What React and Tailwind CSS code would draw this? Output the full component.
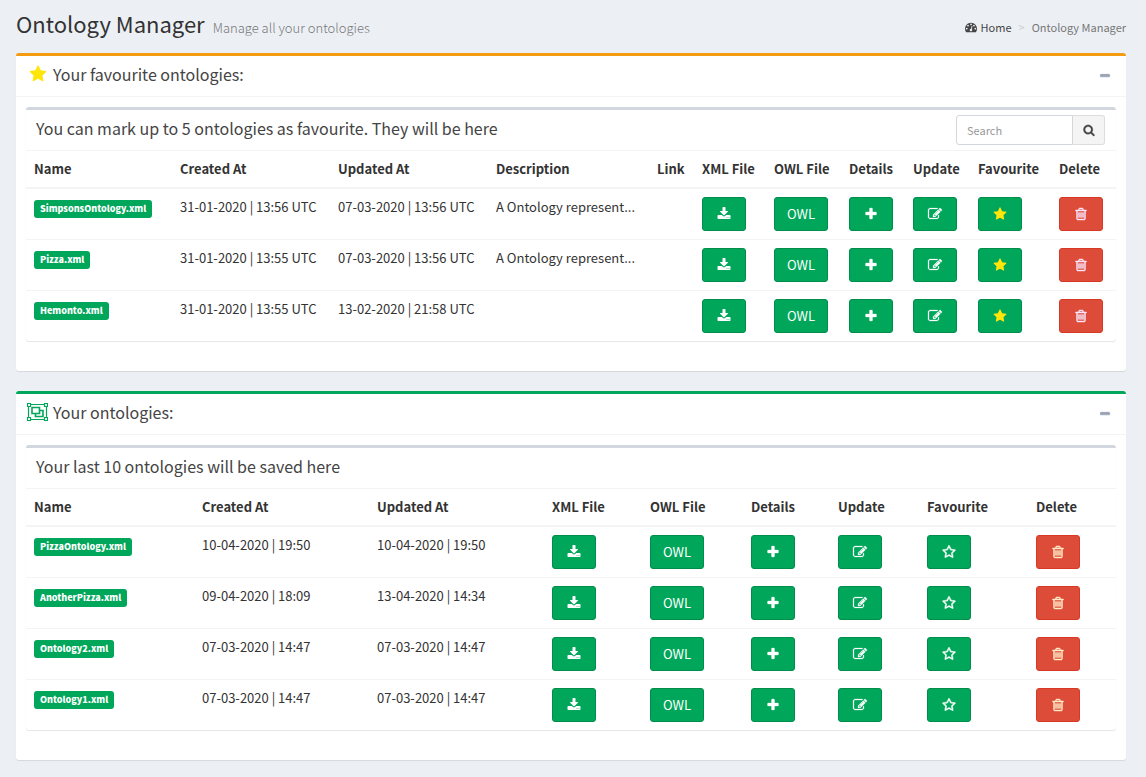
const PATHS = {
  download:
    "M1344 1344q0-26-19-45t-45-19-45 19-19 45 19 45 45 19 45-19 19-45zm256 0q0-26-19-45t-45-19-45 19-19 45 19 45 45 19 45-19 19-45zm128-224v320q0 40-28 68t-68 28h-1472q-40 0-68-28t-28-68v-320q0-40 28-68t68-28h465l135 136q58 56 136 56t136-56l136-136h464q40 0 68 28t28 68zm-325-569q17 41-14 70l-448 448q-18 19-45 19t-45-19l-448-448q-31-29-14-70 17-39 59-39h256v-448q0-26 19-45t45-19h256q26 0 45 19t19 45v448h256q42 0 59 39z",
  plus: "M1600 736v192q0 40-28 68t-68 28h-416v416q0 40-28 68t-68 28h-192q-40 0-68-28t-28-68v-416h-416q-40 0-68-28t-28-68v-192q0-40 28-68t68-28h416v-416q0-40 28-68t68-28h192q40 0 68 28t28 68v416h416q40 0 68 28t28 68z",
  minus: "M1600 736v192q0 40-28 68t-68 28h-1216q-40 0-68-28t-28-68v-192q0-40 28-68t68-28h1216q40 0 68 28t28 68z",
  star: "M1728 647q0 22-26 48l-363 354 86 500q1 7 1 20 0 21-10.5 35.5t-30.5 14.5q-19 0-40-12l-449-236-449 236q-22 12-40 12-21 0-31.5-14.5t-10.5-35.5q0-6 2-20l86-500-364-354q-25-27-25-48 0-37 56-46l502-73 225-455q19-41 49-41t49 41l225 455 502 73q56 9 56 46z",
  starOutline:
    "M1201 1004l306-297-422-62-189-382-189 382-422 62 306 297-73 421 378-199 377 199zm527-357q0 22-26 48l-363 354 86 500q1 7 1 20 0 50-41 50-19 0-40-12l-449-236-449 236q-22 12-40 12-21 0-31.5-14.5t-10.5-35.5q0-6 2-20l86-500-364-354q-25-27-25-48 0-37 56-46l502-73 225-455q19-41 49-41t49 41l225 455 502 73q56 9 56 46z",
  trash:
    "M704 736v576q0 14-9 23t-23 9h-64q-14 0-23-9t-9-23v-576q0-14 9-23t23-9h64q14 0 23 9t9 23zm256 0v576q0 14-9 23t-23 9h-64q-14 0-23-9t-9-23v-576q0-14 9-23t23-9h64q14 0 23 9t9 23zm256 0v576q0 14-9 23t-23 9h-64q-14 0-23-9t-9-23v-576q0-14 9-23t23-9h64q14 0 23 9t9 23zm128 724v-948h-896v948q0 22 7 40.5t14.5 27 10.5 8.5h832q3 0 10.5-8.5t14.5-27 7-40.5zm-672-1076h448l-48-117q-7-9-17-11h-317q-10 2-17 11zm928 32v64q0 14-9 23t-23 9h-96v948q0 83-47 143.5t-113 60.5h-832q-66 0-113-58.5t-47-141.5v-952h-96q-14 0-23-9t-9-23v-64q0-14 9-23t23-9h309l70-167q15-37 54-63t79-26h320q40 0 79 26t54 63l70 167h309q14 0 23 9t9 23z",
  edit: "M888 1184l116-116-152-152-116 116v56h96v96h56zm440-720q-16-16-33 1l-350 350q-17 17-1 33t33-1l350-350q17-17 1-33zm80 594v190q0 119-84.5 203.5t-203.5 84.5h-832q-119 0-203.5-84.5t-84.5-203.5v-832q0-119 84.5-203.5t203.5-84.5h832q63 0 117 25 15 7 18 23 3 17-9 29l-49 49q-14 14-32 8-23-6-45-6h-832q-66 0-113 47t-47 113v832q0 66 47 113t113 47h832q66 0 113-47t47-113v-126q0-13 9-22l64-64q15-15 35-7t20 29zm-96-738l288 288-672 672h-288v-288zm444 132l-92 92-288-288 92-92q28-28 68-28t68 28l152 152q28 28 28 68t-28 68z",
  search:
    "M1216 832q0-185-131.5-316.5t-316.5-131.5-316.5 131.5-131.5 316.5 131.5 316.5 316.5 131.5 316.5-131.5 131.5-316.5zm512 832q0 52-38 90t-90 38q-54 0-90-38l-343-342q-179 124-399 124-143 0-273.5-55.5t-225-150-150-225-55.5-273.5 55.5-273.5 150-225 225-150 273.5-55.5 273.5 55.5 225 150 150 225 55.5 273.5q0 220-124 399l343 343q37 37 37 90z",
  dashboard:
    "M384 1152q0-53-37.5-90.5t-90.5-37.5-90.5 37.5-37.5 90.5 37.5 90.5 90.5 37.5 90.5-37.5 37.5-90.5zm192-448q0-53-37.5-90.5t-90.5-37.5-90.5 37.5-37.5 90.5 37.5 90.5 90.5 37.5 90.5-37.5 37.5-90.5zm428 481l101-382q6-26-7.5-48.5t-38.5-29.5-48 6.5-30 39.5l-101 382q-60 5-107 43.5t-63 98.5q-20 77 20 146t117 89 146-20 89-117q16-60-6-117t-72-91zm660-33q0-53-37.5-90.5t-90.5-37.5-90.5 37.5-37.5 90.5 37.5 90.5 90.5 37.5 90.5-37.5 37.5-90.5zm-640-640q0-53-37.5-90.5t-90.5-37.5-90.5 37.5-37.5 90.5 37.5 90.5 90.5 37.5 90.5-37.5 37.5-90.5zm448 192q0-53-37.5-90.5t-90.5-37.5-90.5 37.5-37.5 90.5 37.5 90.5 90.5 37.5 90.5-37.5 37.5-90.5zm320 448q0 261-141 483-19 29-54 29h-1402q-35 0-54-29-141-221-141-483 0-182 71-348t191-286 286-191 348-71 348 71 286 191 191 286 71 348z",
};

const BOLD = { starOutline: 70, trash: 60, edit: 30, minus: 90, plus: 40, search: 40 };

function Icon({ name, className = "size-3.5" }) {
  return (
    <svg
      viewBox="0 0 1792 1792"
      fill="currentColor"
      stroke="currentColor"
      strokeWidth={BOLD[name] || 0}
      overflow="visible"
      aria-hidden="true"
      className={className}
    >
      <path d={PATHS[name]} />
    </svg>
  );
}

function GroupIcon() {
  return (
    <svg viewBox="0 0 21 18" fill="none" stroke="#00a65a" aria-hidden="true" className="h-[18px] w-[21px]">
      <path d="M3.5 1.5h14M3.5 16.5h14M1.5 3.5v11M19.5 3.5v11" strokeWidth="1.2" />
      <path d="M.5 .5h3v3h-3zM17.5 .5h3v3h-3zM.5 14.5h3v3h-3zM17.5 14.5h3v3h-3z" strokeWidth="1.2" />
      <path d="M5 4.5h7.5v6H5zM12.5 7.5h3.5v6H8.5v-3" strokeWidth="1.6" />
    </svg>
  );
}

const COLUMNS = {
  favourites: [
    ["Name", "w-[146px]"],
    ["Created At", "w-[158px]"],
    ["Updated At", "w-[158px]"],
    ["Description", "w-[161px]"],
    ["Link", "w-[45px]"],
    ["XML File", "w-[72px]"],
    ["OWL File", "w-[75px]"],
    ["Details", "w-[64px]"],
    ["Update", "w-[65px]"],
    ["Favourite", "w-[81px]"],
    ["Delete", "w-[65px]"],
  ],
  own: [
    ["Name", "w-[168px]"],
    ["Created At", "w-[175px]"],
    ["Updated At", "w-[175px]"],
    ["XML File", "w-[98px]"],
    ["OWL File", "w-[101px]"],
    ["Details", "w-[87px]"],
    ["Update", "w-[89px]"],
    ["Favourite", "w-[109px]"],
    ["Delete", "w-[88px]"],
  ],
};

const FAVOURITES = [
  ["SimpsonsOntology.xml", "31-01-2020 | 13:56 UTC", "07-03-2020 | 13:56 UTC", "A Ontology represent...", ""],
  ["Pizza.xml", "31-01-2020 | 13:55 UTC", "07-03-2020 | 13:56 UTC", "A Ontology represent...", ""],
  ["Hemonto.xml", "31-01-2020 | 13:55 UTC", "13-02-2020 | 21:58 UTC", "", ""],
];

const OWN = [
  ["PizzaOntology.xml", "10-04-2020 | 19:50", "10-04-2020 | 19:50"],
  ["AnotherPizza.xml", "09-04-2020 | 18:09", "13-04-2020 | 14:34"],
  ["Ontology2.xml", "07-03-2020 | 14:47", "07-03-2020 | 14:47"],
  ["Ontology1.xml", "07-03-2020 | 14:47", "07-03-2020 | 14:47"],
];

function ActionButton({ label, danger, children }) {
  return (
    <button
      type="button"
      aria-label={label}
      className={
        "flex h-[34px] min-w-11 items-center justify-center rounded-[3px] border px-3 text-[13px] text-white " +
        (danger ? "border-[#d73925] bg-[#dd4b39]" : "border-[#008d4c] bg-[#00a65a]")
      }
    >
      {children}
    </button>
  );
}

function OntologyTable({ columns, rows, favourite }) {
  return (
    <table className="w-full table-fixed border-separate border-spacing-0 text-left">
      <colgroup>
        {columns.map(([title, width]) => (
          <col key={title} className={width} />
        ))}
      </colgroup>
      <thead>
        <tr>
          {columns.map(([title]) => (
            <th key={title} scope="col" className="border-b-2 border-[#f4f4f4] p-2 font-bold whitespace-nowrap">
              {title}
            </th>
          ))}
        </tr>
      </thead>
      <tbody className="[&>tr+tr>td]:border-t [&>tr+tr>td]:border-[#f4f4f4] [&_td]:p-2 [&_td]:align-top">
        {rows.map(([name, ...texts]) => (
          <tr key={name}>
            <td>
              <span className="mt-[3px] inline-block h-[18px] rounded-[3px] bg-[#00a65a] px-1.5 align-top text-[9px] leading-[17px] font-black whitespace-nowrap text-white">
                {name}
              </span>
            </td>
            {texts.map((text, i) => (
              <td key={i} className="whitespace-nowrap">
                {text}
              </td>
            ))}
            <td>
              <ActionButton label={`Download ${name}`}>
                <Icon name="download" />
              </ActionButton>
            </td>
            <td>
              <ActionButton>OWL</ActionButton>
            </td>
            <td>
              <ActionButton label={`Details of ${name}`}>
                <Icon name="plus" />
              </ActionButton>
            </td>
            <td>
              <ActionButton label={`Update ${name}`}>
                <Icon name="edit" />
              </ActionButton>
            </td>
            <td>
              <ActionButton label={`Favourite ${name}`}>
                {favourite ? (
                  <Icon name="star" className="size-3.5 text-[#ffe60a]" />
                ) : (
                  <Icon name="starOutline" />
                )}
              </ActionButton>
            </td>
            <td>
              <ActionButton label={`Delete ${name}`} danger>
                <Icon name="trash" className={favourite ? "size-3.5 text-[#f8e6fc]" : "size-3.5 text-[#ffecc8]"} />
              </ActionButton>
            </td>
          </tr>
        ))}
      </tbody>
    </table>
  );
}

function Panel({ accent, icon, title, subtitle, tools, children }) {
  return (
    <section className={"rounded-[3px] border-t-[3px] bg-white shadow-[0_1px_1px_rgba(0,0,0,0.1)] " + accent}>
      <header className="flex h-[41px] items-center justify-between border-b border-[#f4f4f4] pr-[11px] pb-1 pl-2.5">
        <h2 className="flex items-center gap-1 text-[16px] text-[#444]">
          <span className="flex w-[23px] justify-center">{icon}</span>
          {title}
        </h2>
        <button type="button" aria-label="Collapse" className="px-1 pt-1 text-[#97a0b3]">
          <Icon name="minus" className="size-3" />
        </button>
      </header>
      <div className="px-2.5 pt-2.5 pb-[30px]">
        <div className="rounded-[3px] border-t-[3px] border-[#d2d6de] shadow-[0_1px_1px_rgba(0,0,0,0.1)]">
          <div className="flex h-[41px] items-center justify-between border-b border-[#f4f4f4] pr-[11px] pl-2.5">
            <h3 className="pb-1 text-[16px] text-[#444]">{subtitle}</h3>
            {tools}
          </div>
          {children}
        </div>
      </div>
    </section>
  );
}

function SearchBox() {
  return (
    <form className="flex h-[30px]" onSubmit={(e) => e.preventDefault()}>
      <input
        type="text"
        aria-label="Search"
        placeholder="Search"
        className="w-[117px] rounded-l-[3px] border border-[#d2d6de] bg-white px-2.5 text-[11px] outline-none placeholder:text-[#999]"
      />
      <button
        type="submit"
        aria-label="Submit search"
        className="flex w-8 items-center justify-center rounded-r-[3px] border border-l-0 border-[#ddd] bg-[#f4f4f4] text-[#444]"
      >
        <Icon name="search" className="size-3" />
      </button>
    </form>
  );
}

export default function App() {
  return (
    <div className="min-h-screen bg-[#ecf0f5] pr-5 pb-4 pl-4 font-['Noto_Sans_CJK_SC','Noto_Sans',sans-serif] text-[13px] leading-5 text-[#333]">
      <header className="flex h-[53px] items-center justify-between">
        <h1 className="flex items-baseline gap-2 pb-0.5 text-[22px]">
          Ontology Manager
          <small className="text-[13px] font-light text-[#777]">Manage all your ontologies</small>
        </h1>
        <nav aria-label="Breadcrumb" className="flex items-center text-[11px]">
          <a href="#home" className="flex items-center gap-1 text-[#444]">
            <Icon name="dashboard" className="size-3" />
            Home
          </a>
          <span className="px-[7px] text-[#ccc]">&gt;</span>
          <span className="text-[#777]">Ontology Manager</span>
        </nav>
      </header>
      <main className="flex flex-col gap-5">
        <Panel
          accent="border-[#f39c12]"
          icon={<Icon name="star" className="size-[18px] text-[#ffe60a]" />}
          title="Your favourite ontologies:"
          subtitle="You can mark up to 5 ontologies as favourite. They will be here"
          tools={<SearchBox />}
        >
          <OntologyTable columns={COLUMNS.favourites} rows={FAVOURITES} favourite />
        </Panel>
        <Panel
          accent="border-[#00a65a]"
          icon={<GroupIcon />}
          title="Your ontologies:"
          subtitle="Your last 10 ontologies will be saved here"
        >
          <OntologyTable columns={COLUMNS.own} rows={OWN} />
        </Panel>
      </main>
    </div>
  );
}
